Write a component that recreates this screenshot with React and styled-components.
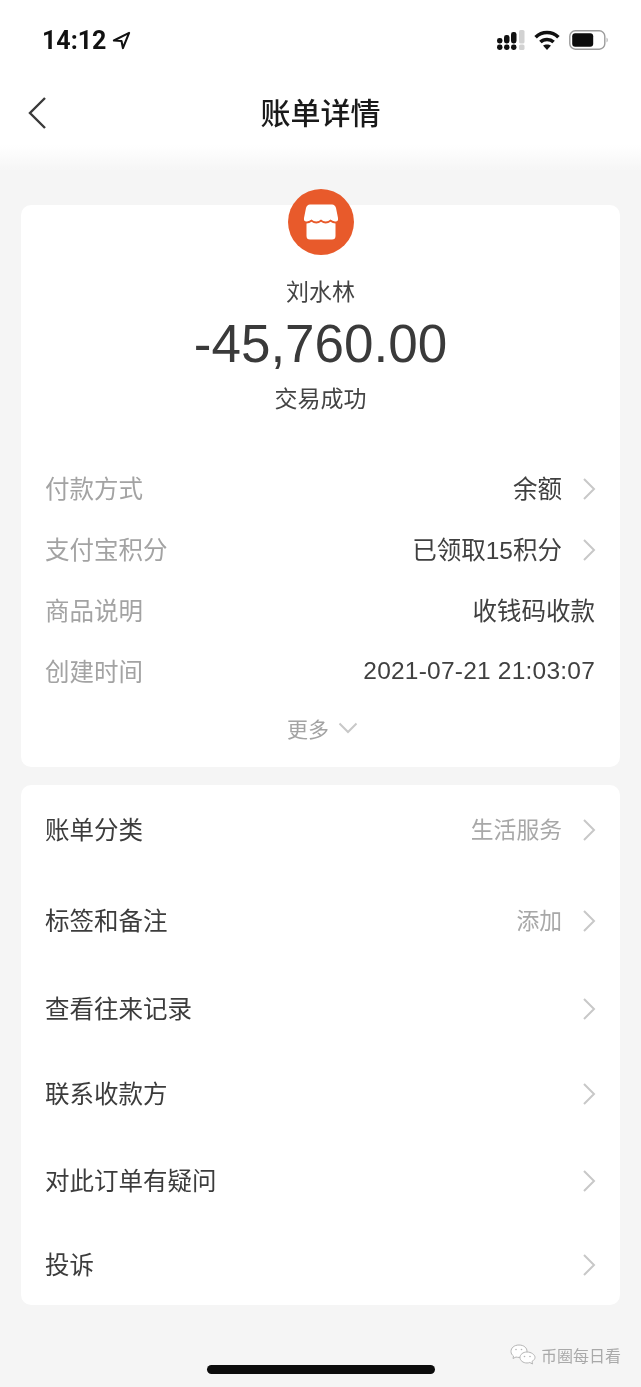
import React from "react";
import styled, { createGlobalStyle } from "styled-components";

const GlobalStyle = createGlobalStyle`
  html, body {
    margin: 0;
    padding: 0;
    background: #f5f5f5;
  }
  * {
    box-sizing: border-box;
  }
`;

const Page = styled.div`
  width: 641px;
  height: 1387px;
  overflow: hidden;
  background: #f5f5f5;
  font-family: "Noto Sans CJK SC", "Liberation Sans", sans-serif;
  color: #333;
  filter: blur(0.5px);
`;

const Header = styled.header`
  height: 170px;
  background: linear-gradient(#fff 0, #fff 145px, #f6f6f6 170px);
`;

const StatusBar = styled.div`
  height: 80px;
  padding: 0 33px 0 42px;
  display: flex;
  align-items: center;
  justify-content: space-between;
`;

const TimeBlock = styled.div`
  display: flex;
  align-items: center;
  gap: 6px;
`;

const Time = styled.span`
  font-family: Roboto, "Liberation Sans", sans-serif;
  font-size: 25px;
  font-weight: 700;
  color: #111;
`;

const StatusIcons = styled.div`
  display: flex;
  align-items: center;
  gap: 9px;
`;

const NavBar = styled.div`
  position: relative;
  height: 66px;
  padding-bottom: 4px;
  display: flex;
  align-items: center;
  justify-content: center;
`;

const BackButton = styled.svg`
  position: absolute;
  left: 27px;
  top: 16px;
`;

const Title = styled.h1`
  margin: 0;
  font-size: 30px;
  font-weight: 500;
  color: #1a1a1a;
`;

const Content = styled.main`
  padding: 35px 21px 0;
  display: flex;
  flex-direction: column;
  gap: 18px;
`;

const Card = styled.section`
  background: #fff;
  border-radius: 10px;
  width: 599px;
  height: ${(props) => props.$height}px;
`;

const Summary = styled.div`
  display: flex;
  flex-direction: column;
  align-items: center;
  margin-top: -16px;
  height: 269px;
`;

const Avatar = styled.div`
  width: 66px;
  height: 66px;
  border-radius: 50%;
  background: #e85a2b;
  display: flex;
  align-items: center;
  justify-content: center;
`;

const Payee = styled.div`
  margin-top: 17px;
  height: 36px;
  line-height: 36px;
  font-size: 23px;
  color: #444;
`;

const Amount = styled.div`
  margin-top: 3px;
  height: 66px;
  line-height: 66px;
  font-family: "Liberation Sans", Arial, sans-serif;
  font-size: 53px;
  color: #3a3a3a;
`;

const Status = styled.div`
  margin-top: 2px;
  height: 36px;
  line-height: 36px;
  font-size: 23px;
  color: #444;
`;

const Row = styled.div`
  height: ${(props) => props.$height}px;
  padding: 0 25px 0 24px;
  display: flex;
  align-items: center;
  justify-content: space-between;
  font-size: 24.5px;
`;

const Label = styled.span`
  padding-bottom: 3px;
  color: ${(props) => (props.$muted ? "#a3a3a3" : "#3c3c3c")};
`;

const Value = styled.span`
  display: flex;
  align-items: center;
  gap: 20px;
  color: ${(props) => (props.$muted ? "#a8a8a8" : "#404040")};
  font-size: ${(props) => (props.$muted ? "22.8px" : "inherit")};
  letter-spacing: ${(props) => (props.$wide ? "0.22px" : "0")};
  font-family: "Liberation Sans", "Noto Sans CJK SC", sans-serif;
`;

const ValueText = styled.span`
  padding-bottom: ${(props) => (props.$wide ? "1px" : "3px")};
`;

const Chevron = styled.svg`
  flex: none;
  margin-right: -1px;
`;

const More = styled.div`
  margin-top: 1px;
  height: 50px;
  padding-left: 4px;
  display: flex;
  align-items: center;
  justify-content: center;
  gap: 9px;
  font-size: 21px;
  color: #a3a3a3;
`;

const Footer = styled.footer`
  position: relative;
  height: 82px;
  padding-bottom: 13px;
  display: flex;
  align-items: flex-end;
  justify-content: center;
`;

const HomeBar = styled.div`
  width: 228px;
  height: 9px;
  border-radius: 5px;
  background: #0c0c0c;
`;

const Watermark = styled.div`
  position: absolute;
  left: 510px;
  top: 38px;
  display: flex;
  align-items: center;
  gap: 5px;
  font-size: 16px;
  color: #a9a9a9;
`;

const RightArrow = () => (
  <Chevron width="14" height="24" viewBox="0 0 14 24" fill="none" stroke="#c8c8c8" strokeWidth="2">
    <path d="M2 2 L12 12 L2 22" />
  </Chevron>
);

const SignalIcon = () => (
  <svg width="28" height="20" viewBox="0 0 28 20" fill="#111">
    <rect x="0" y="8" width="5.5" height="5.5" rx="2.4" />
    <rect x="0" y="14.5" width="5.5" height="5.5" rx="2.4" />
    <rect x="7" y="5" width="5.5" height="8.5" rx="2.4" />
    <rect x="7" y="14.5" width="5.5" height="5.5" rx="2.4" />
    <rect x="14" y="2" width="5.5" height="11.5" rx="2.4" />
    <rect x="14" y="14.5" width="5.5" height="5.5" rx="2.4" />
    <rect x="22" y="0" width="5.5" height="13.5" rx="1.6" fill="#d2d2d2" />
    <rect x="22" y="14.5" width="5.5" height="5.5" rx="1.6" fill="#d2d2d2" />
  </svg>
);

const WifiIcon = () => (
  <svg width="26" height="20" viewBox="0 0 26 20" fill="none" stroke="#111" strokeWidth="3.6">
    <path d="M1.6 7.2 C8 1 18 1 24.4 7.2" />
    <path d="M6.4 12 C10 8.6 16 8.6 19.6 12" />
    <path d="M13 20 L9 15.6 C11 14 15 14 17 15.6 Z" fill="#111" stroke="none" />
  </svg>
);

const BatteryIcon = () => (
  <svg width="39" height="20" viewBox="0 0 39 20" fill="none">
    <rect x="0.8" y="0.8" width="35" height="18.4" rx="5.5" stroke="#9c9c9c" strokeWidth="1.4" />
    <rect x="3.2" y="3.2" width="21" height="13.6" rx="3" fill="#0c0c0c" />
    <path d="M37.6 7.5 C39 8.5 39 11.5 37.6 12.5 Z" fill="#9c9c9c" />
  </svg>
);

const LocationIcon = () => (
  <svg width="19" height="19" viewBox="0 0 20 20" fill="none" stroke="#111" strokeWidth="2.2" strokeLinejoin="round">
    <path d="M18 2 L2 10 L10 10.5 L11.5 18 Z" />
  </svg>
);

const ShopIcon = () => (
  <svg width="36" height="36" viewBox="0 0 36 36" fill="#fff">
    <path d="M7 0.5 H29 Q32 0.5 33 4 L35 14 Q35.5 18 32 17.5 Q29.5 17 27.5 15.5 Q25.5 17.5 22.7 17.5 Q20 17.5 18 15.5 Q16 17.5 13.3 17.5 Q10.5 17.5 8.5 15.5 Q6.5 17 4 17.5 Q0.5 18 1 14 L3 4 Q4 0.5 7 0.5 Z" />
    <path d="M3.5 19.5 Q6.5 19.5 8.5 17.8 Q10.5 19.6 13.3 19.6 Q16 19.6 18 17.8 Q20 19.6 22.7 19.6 Q25.5 19.6 27.5 17.8 Q29.5 19.5 32.5 19.5 V32 Q32.5 35.5 29 35.5 H7 Q3.5 35.5 3.5 32 Z" />
  </svg>
);

const WechatIcon = () => (
  <svg width="26" height="22" viewBox="0 0 26 22" fill="#fff" stroke="#b5b5b5" strokeWidth="1">
    <path d="M9 1 C4 1 1 4 1 7.5 C1 9.5 2 11 3.5 12 L3 14.5 L6 13 C7 13.3 8 13.4 9 13.4 C14 13.4 17 10.5 17 7.2 C17 4 14 1 9 1 Z" />
    <path d="M17 8 C13 8 10 10.5 10 13.5 C10 16.5 13 19 17 19 C18 19 19 18.8 19.8 18.5 L22.5 20 L22 17.5 C23.6 16.5 25 15 25 13.5 C25 10.5 21 8 17 8 Z" />
    <circle cx="6" cy="5.5" r="0.8" fill="#b5b5b5" stroke="none" />
    <circle cx="11.5" cy="5.5" r="0.8" fill="#b5b5b5" stroke="none" />
    <circle cx="14.5" cy="12.5" r="0.8" fill="#b5b5b5" stroke="none" />
    <circle cx="20" cy="12.5" r="0.8" fill="#b5b5b5" stroke="none" />
  </svg>
);

const details = [
  { label: "付款方式", value: "余额", arrow: true },
  { label: "支付宝积分", value: "已领取15积分", arrow: true },
  { label: "商品说明", value: "收钱码收款" },
  { label: "创建时间", value: "2021-07-21 21:03:07", wide: true },
];

const actions = [
  { label: "账单分类", value: "生活服务", height: 90 },
  { label: "标签和备注", value: "添加", height: 92 },
  { label: "查看往来记录", height: 84 },
  { label: "联系收款方", height: 86 },
  { label: "对此订单有疑问", height: 87 },
  { label: "投诉", height: 81 },
];

export default function App() {
  return (
    <Page>
      <GlobalStyle />
      <Header>
        <StatusBar>
          <TimeBlock>
            <Time>14:12</Time>
            <LocationIcon />
          </TimeBlock>
          <StatusIcons>
            <SignalIcon />
            <WifiIcon />
            <BatteryIcon />
          </StatusIcons>
        </StatusBar>
        <NavBar>
          <BackButton width="20" height="34" viewBox="0 0 20 34" fill="none" stroke="#3a3a3a" strokeWidth="2.4">
            <path d="M18 2 L3 17 L18 32" />
          </BackButton>
          <Title>账单详情</Title>
        </NavBar>
      </Header>
      <Content>
        <Card $height={562}>
          <Summary>
            <Avatar>
              <ShopIcon />
            </Avatar>
            <Payee>刘水林</Payee>
            <Amount>-45,760.00</Amount>
            <Status>交易成功</Status>
          </Summary>
          {details.map((item) => (
            <Row key={item.label} $height={61}>
              <Label $muted>{item.label}</Label>
              <Value $wide={item.wide}>
                <ValueText $wide={item.wide}>{item.value}</ValueText>
                {item.arrow && <RightArrow />}
              </Value>
            </Row>
          ))}
          <More>
            更多
            <svg width="20" height="12" viewBox="0 0 20 12" fill="none" stroke="#c8c8c8" strokeWidth="2">
              <path d="M1.5 1.5 L10 10 L18.5 1.5" />
            </svg>
          </More>
        </Card>
        <Card $height={520}>
          {actions.map((item) => (
            <Row key={item.label} $height={item.height}>
              <Label>{item.label}</Label>
              <Value $muted>
                <ValueText>{item.value}</ValueText>
                <RightArrow />
              </Value>
            </Row>
          ))}
        </Card>
      </Content>
      <Footer>
        <HomeBar />
        <Watermark>
          <WechatIcon />
          币圈每日看
        </Watermark>
      </Footer>
    </Page>
  );
}
